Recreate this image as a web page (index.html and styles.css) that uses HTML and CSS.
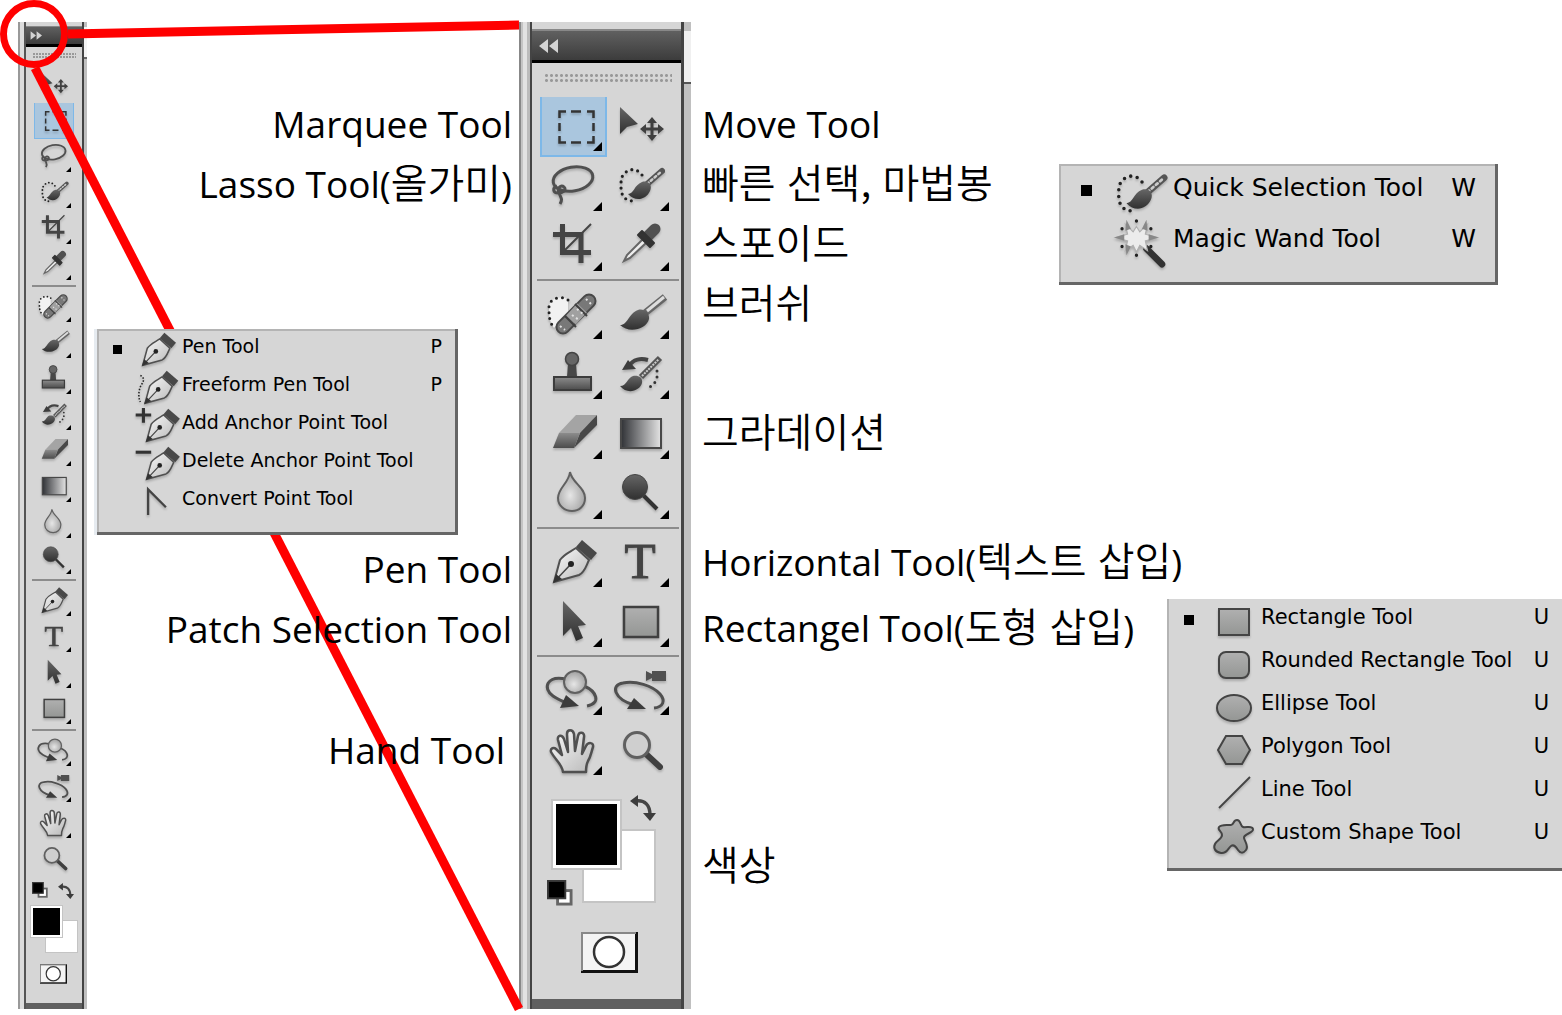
FILE: index.html
```html
<!DOCTYPE html>
<html lang="ko">
<head>
  <meta charset="UTF-8">
  <meta name="viewport" content="width=device-width, initial-scale=1.0">
  <title>Photoshop Tools</title>
  <link rel="stylesheet" href="styles.css">
</head>
<body>
  <!-- Icon sprite shared by both toolbars and the menus -->
  <svg class="sprite" width="0" height="0" aria-hidden="true">
    <defs>
      <linearGradient id="g-dark" x1="0" y1="0" x2="0" y2="1"><stop offset="0" stop-color="#666"/><stop offset="1" stop-color="#303030"/></linearGradient>
      <linearGradient id="g-mid" x1="0" y1="0" x2="0" y2="1"><stop offset="0" stop-color="#b0b0b0"/><stop offset="1" stop-color="#949694"/></linearGradient>
      <linearGradient id="g-stamp" x1="0" y1="0" x2="0" y2="1"><stop offset="0" stop-color="#8c8c8c"/><stop offset="1" stop-color="#4c4c4c"/></linearGradient>
      <linearGradient id="g-fade" x1="0" y1="0" x2="1" y2="0"><stop offset="0" stop-color="#303236"/><stop offset="1" stop-color="#e4e4e4"/></linearGradient>
      <linearGradient id="g-nib" x1="0" y1="0" x2="1" y2="1"><stop offset="0" stop-color="#fafafa"/><stop offset="1" stop-color="#b8b8b8"/></linearGradient>
      <radialGradient id="g-ball" cx=".45" cy=".6" r=".6"><stop offset="0" stop-color="#e6e6e6"/><stop offset="1" stop-color="#a0a0a0"/></radialGradient>
    </defs>

    <symbol id="marquee" viewBox="0 0 67 60">
      <path d="M19.500 21v-6.500H26M31 14.500h10M47 14.500h6.500V21M53.500 26v8M53.500 39v6.500H47M41 45.500H31M26 45.500h-6.500V39M19.500 34v-8" fill="none" stroke="#333" stroke-width="2.500"/>
    </symbol>
    <symbol id="move" viewBox="0 0 67 60">
      <path d="M13 10v27l7-7 11-3z" fill="url(#g-dark)"/>
      <path d="M45 23v18M36 32h18" stroke="#404040" stroke-width="3"/>
      <path d="M45 20l5 6H40zM45 44l5-6H40zM33 32l6-5v10zM57 32l-6-5v10z" fill="#404040"/>
    </symbol>
    <symbol id="lasso" viewBox="0 0 67 60">
      <ellipse cx="33" cy="22" rx="20" ry="12" transform="rotate(-10 33 22)" fill="none" stroke="#505050" stroke-width="3"/>
      <path d="M17 29c-5 2-4 7 1 7s9-3 6-6-7 1-5 6 4 6 1 11" fill="none" stroke="#505050" stroke-width="3"/>
    </symbol>
    <symbol id="quick" viewBox="0 0 67 60">
      <path d="M35 18C31 12 24 11 19 15s-5 8-5 14 1 15 13 15" fill="none" stroke="#222" stroke-width="3.200" stroke-linecap="round" stroke-dasharray="0 6"/>
      <path d="M39 28L55 14" stroke="#555" stroke-width="6" stroke-linecap="round"/>
      <path d="M40 27L55 14" stroke="#ccc" stroke-width="2.500" stroke-linecap="round" stroke-dasharray="2 3"/>
      <path d="M21 37c6 0 6-9 14-12 6-2 11 3 8 9-4 9-15 11-22 3z" fill="url(#g-dark)"/>
    </symbol>
    <symbol id="crop" viewBox="0 0 67 60">
      <path d="M22.500 7v28.500H51M13 17.500h28V46" fill="none" stroke="#444" stroke-width="5"/>
      <path d="M25 33L51 7" stroke="#444" stroke-width="2"/>
    </symbol>
    <symbol id="dropper" viewBox="0 0 67 60">
      <path d="M36 22L20 38l-3 6 6-3 17-16z" fill="#eee" stroke="#666" stroke-width="2"/>
      <path d="M40 20l8-8" stroke="#505050" stroke-width="11" stroke-linecap="round"/>
      <path d="M31 18l4-4 12 12-4 4z" fill="#333" stroke="#333" stroke-width="2" stroke-linejoin="round"/>
    </symbol>
    <symbol id="heal" viewBox="0 0 67 60">
      <path d="M28 15C22 10 9 13 9 22s0 14 5 21l14-16z" fill="#f2f2f2"/>
      <path d="M28 15C22 10 9 13 9 22s0 14 5 21" fill="none" stroke="#222" stroke-width="3" stroke-linecap="round" stroke-dasharray="0 6"/>
      <path d="M23 42L49 16" stroke="#484848" stroke-width="15" stroke-linecap="round"/>
      <path d="M23 42L49 16" stroke="#787878" stroke-width="11" stroke-linecap="round"/>
      <path d="M31 35L42 23" stroke="#a0a0a0" stroke-width="13"/>
      <path d="M25 31l11 11M35 19l12 12" stroke="#404040" stroke-width="2"/>
      <path d="M32 30l7 5M37 24l6 5M20 41l5 4M46 14l5 5" stroke="#e0e0e0" stroke-width="2" stroke-dasharray="2 3"/>
    </symbol>
    <symbol id="brush" viewBox="0 0 67 60">
      <path d="M38 28L58 12" stroke="#666" stroke-width="7"/>
      <path d="M40 26L57 12" stroke="#ddd" stroke-width="3"/>
      <path d="M13 40c8 0 8-11 18-15 6-2 12 3 11 9-2 10-20 15-29 6z" fill="url(#g-dark)"/>
    </symbol>
    <symbol id="stamp" viewBox="0 0 67 60">
      <path d="M28 18h8l1 14H27z" fill="#484848"/>
      <circle cx="32" cy="14" r="6.500" fill="#666" stroke="#444" stroke-width="1.500"/>
      <rect x="14" y="32" width="37" height="13" fill="url(#g-stamp)" stroke="#3c3c3c" stroke-width="2"/>
    </symbol>
    <symbol id="history" viewBox="0 0 67 60">
      <path d="M22 21C26 14 34 13 41 15" fill="none" stroke="#444" stroke-width="4"/>
      <path d="M15 25l6-10 8 9z" fill="#3c3c3c"/>
      <path d="M34 32L53 13" stroke="#555" stroke-width="6"/>
      <path d="M35 31L52 14" stroke="#ccc" stroke-width="2" stroke-dasharray="2 1"/>
      <path d="M13 41c7 0 7-8 13-10 6-1 10 2 9 7-2 8-15 12-22 3z" fill="url(#g-dark)"/>
      <path d="M50 26c1 7-1 13-9 17" fill="none" stroke="#333" stroke-width="3" stroke-linecap="round" stroke-dasharray="0 6"/>
    </symbol>
    <symbol id="eraser" viewBox="0 0 67 60">
      <path d="M36 10h21L40 28H19z" fill="#a4a4a4"/>
      <path d="M57 10v10L34 43l6-15z" fill="#484848"/>
      <path d="M19 28h21l-6 15H13z" fill="url(#g-stamp)"/>
    </symbol>
    <symbol id="gradient" viewBox="0 0 67 60">
      <rect x="14" y="14" width="40" height="29" fill="url(#g-fade)" stroke="#484848" stroke-width="2"/>
    </symbol>
    <symbol id="blur" viewBox="0 0 67 60">
      <path d="M30 7c2 11 15 15 15 26 0 8-6 13-13 13s-14-5-14-13c0-10 11-15 12-26z" fill="url(#g-ball)" stroke="#606060" stroke-width="2"/>
    </symbol>
    <symbol id="dodge" viewBox="0 0 67 60">
      <path d="M36 30l14 14" stroke="#333" stroke-width="4"/>
      <circle cx="28" cy="22" r="12.500" fill="url(#g-dark)" stroke="#444"/>
    </symbol>
    <symbol id="pen" viewBox="0 0 67 60">
      <path d="M14 49l6-22c4-6 10-8 16-12l13 12c-3 6-4 12-10 15z" fill="url(#g-nib)" stroke="#505050" stroke-width="2"/>
      <path d="M14 49l17-18" stroke="#444" stroke-width="1.500"/>
      <circle cx="31" cy="31" r="3" fill="#222"/>
      <path d="M42 7l15 13-6 7-15-13z" fill="#484848"/>
      <path d="M13 50l3-9 6 5z" fill="#333"/>
    </symbol>
    <symbol id="path" viewBox="0 0 67 60">
      <path d="M23 8v35l8-8 5 13 7-3-5-12 8-1z" fill="url(#g-dark)"/>
    </symbol>
    <symbol id="rect" viewBox="0 0 67 60">
      <rect x="17" y="14" width="34" height="30" fill="url(#g-mid)" stroke="#404040" stroke-width="2.500"/>
    </symbol>
    <symbol id="orbit" viewBox="0 0 67 60">
      <path d="M26 18C7 14 2 27 13 35c4 3 9 5 14 7M44 25c12 5 18 17 3 20" fill="none" stroke="#505050" stroke-width="3"/>
      <path d="M26 34l13 11-19 2z" fill="#3c3c3c"/>
      <circle cx="35" cy="21" r="11" fill="url(#g-ball)" stroke="#606060" stroke-width="2"/>
    </symbol>
    <symbol id="camera" viewBox="0 0 67 60">
      <path d="M27 44C7 38 3 24 16 22c12-3 30 3 37 11 6 7 3 13-6 14" fill="none" stroke="#505050" stroke-width="3"/>
      <path d="M27 37l12 11H20z" fill="#3c3c3c"/>
      <path d="M39 10l6 3v-3h14v10H45v-3l-6 3z" fill="#505050"/>
    </symbol>
    <symbol id="hand" viewBox="0 0 67 60">
      <path d="M23 51c-1-8-7-11-12-20-1-4 3-5 5-3l6 6-4-15c-1-5 4-6 6-1l4 13-1-18c0-5 6-5 7 0l1 17 3-15c1-5 7-4 6 1l-2 17 4-8c2-4 8-4 7 1-2 6-2 9-5 14-2 4-2 7-2 11z" fill="url(#g-nib)" stroke="#505050" stroke-width="2.500" stroke-linejoin="round"/>
    </symbol>
    <symbol id="zoom" viewBox="0 0 67 60">
      <path d="M39 33l14 13" stroke="#404040" stroke-width="6" stroke-linecap="round"/>
      <circle cx="30" cy="24" r="12.500" fill="#cfcfcf" stroke="#606060" stroke-width="3"/>
    </symbol>
    <symbol id="swap" viewBox="0 0 26 26">
      <path d="M6 6c9-1 14 4 14 14" fill="none" stroke="#444" stroke-width="3.500"/>
      <path d="M0 6l8-6v12zM13 18h13l-6 8z" fill="#3c3c3c"/>
    </symbol>
    <symbol id="default" viewBox="0 0 27 27">
      <rect x="11" y="11" width="14" height="14" fill="#fff" stroke="#666" stroke-width="3"/>
      <rect x="1" y="1" width="18" height="18" fill="#000" stroke="#3a3a3a" stroke-width="2"/>
    </symbol>
    <symbol id="mask" viewBox="0 0 57 41">
      <rect width="57" height="41" fill="#111"/>
      <path d="M0 0h55v2H2v37H0z" fill="#888"/>
      <rect x="2" y="2" width="52" height="36" fill="#f4f4f4"/>
      <circle cx="28" cy="20" r="15" fill="#fff" stroke="#333" stroke-width="2.500"/>
    </symbol>
  </svg>

  <main class="board">
    <aside class="palette palette-small" aria-label="Single column toolbar">
      <div class="panel">
        <button class="collapse" aria-label="Expand"><svg viewBox="0 0 20 14"><path d="M1 0l9 7-9 7zM11 0l9 7-9 7z" fill="#d4d4d4"/></svg></button>
        <div class="grip"></div>
        <div class="tools">
          <button class="tool" aria-label="Move"><svg><use href="#move"/></svg></button>
          <button class="tool active" aria-label="Marquee"><svg><use href="#marquee"/></svg></button>
          <button class="tool more" aria-label="Lasso"><svg><use href="#lasso"/></svg></button>
          <button class="tool more" aria-label="Quick selection"><svg><use href="#quick"/></svg></button>
          <button class="tool more" aria-label="Crop"><svg><use href="#crop"/></svg></button>
          <button class="tool more" aria-label="Eyedropper"><svg><use href="#dropper"/></svg></button>
          <hr>
          <button class="tool more" aria-label="Healing brush"><svg><use href="#heal"/></svg></button>
          <button class="tool more" aria-label="Brush"><svg><use href="#brush"/></svg></button>
          <button class="tool more" aria-label="Stamp"><svg><use href="#stamp"/></svg></button>
          <button class="tool more" aria-label="History brush"><svg><use href="#history"/></svg></button>
          <button class="tool more" aria-label="Eraser"><svg><use href="#eraser"/></svg></button>
          <button class="tool more" aria-label="Gradient"><svg><use href="#gradient"/></svg></button>
          <button class="tool more" aria-label="Blur"><svg><use href="#blur"/></svg></button>
          <button class="tool more" aria-label="Dodge"><svg><use href="#dodge"/></svg></button>
          <hr>
          <button class="tool more" aria-label="Pen"><svg><use href="#pen"/></svg></button>
          <button class="tool more" aria-label="Type"><svg viewBox="0 0 67 60"><text x="33" y="45" text-anchor="middle" class="glyph">T</text></svg></button>
          <button class="tool more" aria-label="Path selection"><svg><use href="#path"/></svg></button>
          <button class="tool more" aria-label="Rectangle"><svg><use href="#rect"/></svg></button>
          <hr>
          <button class="tool more" aria-label="3D rotate"><svg><use href="#orbit"/></svg></button>
          <button class="tool more" aria-label="3D camera"><svg><use href="#camera"/></svg></button>
          <button class="tool more" aria-label="Hand"><svg><use href="#hand"/></svg></button>
          <button class="tool" aria-label="Zoom"><svg><use href="#zoom"/></svg></button>
        </div>
        <div class="colors">
          <button class="default" aria-label="Default colors"><svg><use href="#default"/></svg></button>
          <button class="swap" aria-label="Swap colors"><svg><use href="#swap"/></svg></button>
          <button class="swatch background" aria-label="Background color"></button>
          <button class="swatch foreground" aria-label="Foreground color"></button>
        </div>
        <button class="mask" aria-label="Quick mask"><svg><use href="#mask"/></svg></button>
      </div>
    </aside>

    <ul class="labels labels-left">
      <li>Marquee Tool</li>
      <li>Lasso Tool(<span class="ko">올가미</span>)</li>
      <li class="label-pen">Pen Tool</li>
      <li>Patch Selection Tool</li>
      <li class="label-hand">Hand Tool</li>
    </ul>

    <aside class="palette palette-large" aria-label="Two column toolbar">
      <div class="panel">
        <button class="collapse" aria-label="Collapse"><svg viewBox="0 0 20 14"><path d="M9 0L0 7l9 7zM19 0l-9 7 9 7z" fill="#d4d4d4"/></svg></button>
        <div class="grip"></div>
        <div class="tools">
          <button class="tool active more" aria-label="Marquee"><svg><use href="#marquee"/></svg></button>
          <button class="tool" aria-label="Move"><svg><use href="#move"/></svg></button>
          <button class="tool more" aria-label="Lasso"><svg><use href="#lasso"/></svg></button>
          <button class="tool more" aria-label="Quick selection"><svg><use href="#quick"/></svg></button>
          <button class="tool more" aria-label="Crop"><svg><use href="#crop"/></svg></button>
          <button class="tool more" aria-label="Eyedropper"><svg><use href="#dropper"/></svg></button>
          <hr>
          <button class="tool more" aria-label="Healing brush"><svg><use href="#heal"/></svg></button>
          <button class="tool more" aria-label="Brush"><svg><use href="#brush"/></svg></button>
          <button class="tool more" aria-label="Stamp"><svg><use href="#stamp"/></svg></button>
          <button class="tool more" aria-label="History brush"><svg><use href="#history"/></svg></button>
          <button class="tool more" aria-label="Eraser"><svg><use href="#eraser"/></svg></button>
          <button class="tool more" aria-label="Gradient"><svg><use href="#gradient"/></svg></button>
          <button class="tool more" aria-label="Blur"><svg><use href="#blur"/></svg></button>
          <button class="tool more" aria-label="Dodge"><svg><use href="#dodge"/></svg></button>
          <hr>
          <button class="tool more" aria-label="Pen"><svg><use href="#pen"/></svg></button>
          <button class="tool more" aria-label="Type"><svg viewBox="0 0 67 60"><text x="33" y="45" text-anchor="middle" class="glyph">T</text></svg></button>
          <button class="tool more" aria-label="Path selection"><svg><use href="#path"/></svg></button>
          <button class="tool more" aria-label="Rectangle"><svg><use href="#rect"/></svg></button>
          <hr>
          <button class="tool more" aria-label="3D rotate"><svg><use href="#orbit"/></svg></button>
          <button class="tool more" aria-label="3D camera"><svg><use href="#camera"/></svg></button>
          <button class="tool more" aria-label="Hand"><svg><use href="#hand"/></svg></button>
          <button class="tool" aria-label="Zoom"><svg><use href="#zoom"/></svg></button>
        </div>
        <div class="colors">
          <button class="swatch background" aria-label="Background color"></button>
          <button class="swatch foreground" aria-label="Foreground color"></button>
          <button class="swap" aria-label="Swap colors"><svg><use href="#swap"/></svg></button>
          <button class="default" aria-label="Default colors"><svg><use href="#default"/></svg></button>
        </div>
        <button class="mask" aria-label="Quick mask"><svg><use href="#mask"/></svg></button>
      </div>
    </aside>

    <ul class="labels labels-right">
      <li>Move Tool</li>
      <li><span class="ko">빠른 선택, 마법봉</span></li>
      <li><span class="ko">스포이드</span></li>
      <li><span class="ko">브러쉬</span></li>
      <li class="label-group"><span class="ko">그라데이션</span></li>
      <li class="label-group">Horizontal Tool(<span class="ko">텍스트 삽입</span>)</li>
      <li class="label-shape">Rectangel Tool(<span class="ko">도형 삽입</span>)</li>
      <li class="label-color"><span class="ko">색상</span></li>
    </ul>

    <!-- Red call-out from the collapse button to the wide toolbar -->
    <svg class="callout" width="530" height="1012" aria-hidden="true">
      <g fill="none" stroke="#f00">
        <circle cx="34" cy="34" r="30.500" stroke-width="7"/>
        <path d="M68 34L519 25" stroke-width="9"/>
        <path d="M35 68L519 1009" stroke-width="9"/>
      </g>
    </svg>

    <div class="menu menu-pen">
      <button class="item current"><svg viewBox="3 6 59 49"><use href="#pen" width="67" height="60"/></svg><span>Pen Tool</span><kbd>P</kbd></button>
      <button class="item"><svg viewBox="3 6 59 49"><use href="#pen" x="3" width="67" height="60"/><path d="M11 13c5 2 5 7 2 11s-6 15-2 23" fill="none" stroke="#222" stroke-width="2" stroke-dasharray="2 2"/></svg><span>Freeform Pen Tool</span><kbd>P</kbd></button>
      <button class="item"><svg viewBox="3 6 59 49"><use href="#pen" x="5" width="67" height="60"/><path d="M5 15h20M15 6v19" stroke="#333" stroke-width="4"/></svg><span>Add Anchor Point Tool</span></button>
      <button class="item"><svg viewBox="3 6 59 49"><use href="#pen" x="5" width="67" height="60"/><path d="M5 14h20" stroke="#333" stroke-width="4"/></svg><span>Delete Anchor Point Tool</span></button>
      <button class="item"><svg viewBox="3 6 59 49"><path d="M21 46V13l23 23" fill="none" stroke="#444" stroke-width="3"/></svg><span>Convert Point Tool</span></button>
    </div>

    <div class="menu menu-quick">
      <button class="item current"><svg viewBox="10 8 52 46"><use href="#quick" x="1" width="67" height="60"/></svg><span>Quick Selection Tool</span><kbd>W</kbd></button>
      <button class="item"><svg viewBox="10 8 52 46">
        <path d="M40 32l14 14" stroke="#333" stroke-width="6" stroke-linecap="round"/>
        <path d="M31 12l3 5 7-7-2 9 11 3-11 3 2 9-7-5-3 6-3-6-7 5 2-9-11-3 11-3-2-9 7 7z" fill="#ececec" stroke="#b0b0b0"/>
        <path d="M11 22l9-3v6zM51 22l-9-3v6zM22 6l4 8-5 2zM40 6l-4 8 5 2zM22 38l4-8-5-2z" fill="#888"/>
        <path d="M31 7v.1M31 38v.1M18 14v.1M44 14v.1M18 30v.1M44 30v.1" stroke="#222" stroke-width="3" stroke-linecap="round"/>
      </svg><span>Magic Wand Tool</span><kbd>W</kbd></button>
    </div>

    <div class="menu menu-shape">
      <button class="item current"><svg viewBox="0 0 44 43"><rect x="7" y="6" width="30" height="26" class="shape"/></svg><span>Rectangle Tool</span><kbd>U</kbd></button>
      <button class="item"><svg viewBox="0 0 44 43"><rect x="7" y="6" width="30" height="26" rx="7" class="shape"/></svg><span>Rounded Rectangle Tool</span><kbd>U</kbd></button>
      <button class="item"><svg viewBox="0 0 44 43"><ellipse cx="22" cy="19" rx="17" ry="13" class="shape"/></svg><span>Ellipse Tool</span><kbd>U</kbd></button>
      <button class="item"><svg viewBox="0 0 44 43"><path d="M14 4h16l8 14-8 14H14L6 18z" class="shape"/></svg><span>Polygon Tool</span><kbd>U</kbd></button>
      <button class="item"><svg viewBox="0 0 44 43"><path d="M7 33L38 2" class="shape"/></svg><span>Line Tool</span><kbd>U</kbd></button>
      <button class="item"><svg viewBox="0 0 44 43"><path d="M19 7c3 0 2-5 6-5s3 6 6 7 9-2 10 2-10 5-9 9 5 8 2 12-6 3-8 0-4-6-7-4-4 8-10 7-8-5-6-9 7-5 7-9-5-5-3-8 8-2 12-2z" class="shape"/></svg><span>Custom Shape Tool</span><kbd>U</kbd></button>
    </div>
  </main>
</body>
</html>
```
FILE: styles.css
```css
* {
  margin: 0;
  padding: 0;
  box-sizing: border-box;
}

body {
  background-color: #fff;
  color: #000;
  font-family: "Open Sans", "Noto Sans CJK KR", sans-serif;
}

button {
  border: 0;
  background: none;
  font: inherit;
  color: inherit;
  text-align: left;
}

svg {
  display: block;
}

ul {
  list-style: none;
}

.sprite {
  position: absolute;
}

.board {
  position: relative;
  display: flex;
  align-items: stretch;
  padding: 22px 0 6px 18px;
}

/* Toolbars */
.palette {
  flex: none;
}

.panel {
  display: flex;
  flex-direction: column;
  height: 100%;
  background-color: #d6d6d6;
}

.palette-small {
  width: 69px;
  padding: 4px 5px 0 8px;
  background:
    linear-gradient(#f4f4f4 0 30px, #666 30px 32px) 66px 5px / 3px 32px no-repeat,
    linear-gradient(to right, #999 0 2px, #dcdcdc 2px 6px, #555 6px 8px, #d6d6d6 8px 64px, #444 64px 66px, #c0c0c0 66px);
}

.palette-small .panel {
  border-top: 1px solid #888;
}

.palette-large {
  width: 172px;
  padding: 7px 10px 0 13px;
  background:
    linear-gradient(#f0f0f0 0 51px, #555 51px 53px) 165px 9px / 7px 53px no-repeat,
    linear-gradient(to right, #888 0 2px, #c4c4c4 2px 4px, #e2e2e2 4px 8px, #bbb 8px 11px, #444 11px 13px, #d6d6d6 13px 162px, #444 162px 165px, #c0c0c0 165px);
}

.palette-large .panel {
  border-top: 2px solid #888;
}

.collapse {
  display: flex;
  align-items: center;
  background: linear-gradient(#606060, #3c3c3c);
  border-bottom: 3px solid #000;
}

.palette-small .collapse {
  height: 20px;
  padding-left: 4px;
}

.palette-small .collapse svg {
  width: 12px;
  height: 9px;
}

.palette-large .collapse {
  height: 32px;
  padding-left: 7px;
}

.palette-large .collapse svg {
  width: 20px;
  height: 14px;
}

.palette-small .grip {
  height: 5px;
  margin: 6px 6px 9px 7px;
  background:
    linear-gradient(to right, transparent 2px, #d6d6d6 2px) 0 0 / 3px 5px,
    linear-gradient(#999 0 2px, transparent 2px 3px, #999 3px 5px);
}

.palette-large .grip {
  height: 10px;
  margin: 10px 9px 14px 12px;
  background-image: radial-gradient(circle, #999 0 1px, transparent 2px);
  background-size: 5px 5px;
}

.tools {
  display: grid;
}

.palette-small .tools {
  grid-template-columns: 40px;
  padding-left: 8px;
}

.palette-large .tools {
  grid-template-columns: 67px 67px;
  padding-left: 8px;
}

.tool {
  position: relative;
}

.tool svg,
.item svg {
  filter: drop-shadow(0 2px 1px rgba(0, 0, 0, 0.2));
}

.palette-small .tool,
.palette-small .tool svg {
  width: 40px;
  height: 36px;
}

.palette-large .tool,
.palette-large .tool svg {
  width: 67px;
  height: 60px;
}

.active {
  background-color: #aac6de;
  box-shadow: inset 2px -2px #7db8e8, inset -2px 0 #7db8e8;
}

.palette-small .active {
  box-shadow: inset 1px -1px #7db8e8, inset -1px 0 #7db8e8;
}

.more::after {
  content: "";
  position: absolute;
  right: 5px;
  bottom: 6px;
  width: 9px;
  height: 9px;
  background-color: #000;
  clip-path: polygon(100% 0, 100% 100%, 0 100%);
}

.palette-small .more::after {
  right: 3px;
  bottom: 3px;
  width: 5px;
  height: 5px;
}

.glyph {
  font: 51px "Liberation Serif", serif;
  fill: #444;
  stroke: #444;
  stroke-width: 1px;
}

hr {
  grid-column: 1 / -1;
  height: 2px;
  border: 0;
  background-color: #8c8c8c;
}

.palette-small hr {
  margin: 2px -2px;
}

.palette-large hr {
  width: 142px;
  margin: 2px -3px 4px;
}

/* Colour swatches */
.colors {
  position: relative;
}

.palette-small .colors {
  height: 72px;
  margin-top: 5px;
}

.palette-large .colors {
  height: 111px;
  margin-top: 14px;
}

.swatch,
.swap,
.default {
  position: absolute;
}

.swatch {
  border: 2px solid #c4c4c4;
  background-color: #fff;
}

.foreground {
  background-color: #000;
  box-shadow: inset 0 0 0 2px #fff;
}

.palette-small .swatch {
  width: 33px;
  height: 33px;
  border-width: 1px;
}

.palette-small .foreground {
  left: 4px;
  top: 23px;
}

.palette-small .background {
  left: 19px;
  top: 38px;
}

.palette-small .default {
  left: 6px;
  top: 0;
}

.palette-small .swap {
  right: 8px;
  top: 1px;
}

.palette-small .default svg,
.palette-small .swap svg {
  width: 16px;
  height: 16px;
}

.palette-large .foreground {
  left: 19px;
  top: 4px;
  width: 71px;
  height: 71px;
  box-shadow: inset 0 0 0 3px #fff;
}

.palette-large .background {
  left: 50px;
  top: 34px;
  width: 74px;
  height: 74px;
}

.palette-large .swap {
  left: 98px;
  top: 0;
}

.palette-large .default {
  left: 15px;
  top: 85px;
}

.palette-large .default svg,
.palette-large .swap svg {
  width: 26px;
  height: 26px;
}

.palette-small .mask {
  margin: 10px 0 19px 14px;
}

.palette-small .mask svg {
  width: 27px;
  height: 20px;
}

.palette-large .mask {
  margin: 26px 0 26px 49px;
}

.palette-large .mask svg {
  width: 57px;
  height: 41px;
}

.panel::after {
  content: "";
  flex: 1;
  min-height: 6px;
  background-color: #606060;
}

/* Tool names beside the wide toolbar */
.labels {
  position: relative;
  z-index: 2;
  padding-top: 72px;
  font-size: 37px;
  line-height: 60px;
  white-space: nowrap;
}

.labels li {
  height: 60px;
}

.ko {
  font-family: "Noto Sans CJK KR", sans-serif;
  font-size: 40px;
  font-weight: 350;
  line-height: 1;
}

.labels-left {
  width: 432px;
  padding-right: 7px;
  text-align: right;
}

.labels-right {
  flex: 1;
  padding-left: 11px;
}

.labels .label-pen {
  margin-top: 325px;
}

.labels .label-hand {
  margin-top: 61px;
  padding-right: 7px;
}

.labels .label-group {
  margin-top: 69px;
}

.labels .label-shape {
  margin-top: 6px;
}

.labels .label-color {
  margin-top: 178px;
}

.callout {
  position: absolute;
  left: 0;
  top: 0;
  z-index: 1;
}

/* Flyout menus */
.menu {
  position: absolute;
  z-index: 3;
  background-color: #d6d6d6;
  border: solid #666;
  border-width: 0 3px 3px 0;
  box-shadow: inset 2px 2px #b4b4b4;
  font-family: "DejaVu Sans", sans-serif;
}

.item {
  position: relative;
  display: flex;
  align-items: flex-start;
  width: 100%;
}

.item svg {
  overflow: visible;
}

.item kbd {
  margin-left: auto;
  font: inherit;
}

.current::before {
  content: "";
  position: absolute;
  background-color: #000;
}

.shape {
  fill: url(#g-mid);
  stroke: #444;
  stroke-width: 2px;
}

.menu-pen {
  left: 97px;
  top: 329px;
  width: 361px;
  height: 206px;
  padding: 3px 13px 0 37px;
  box-shadow: inset 2px 2px #b4b4b4, -3px 0 #e6ebf0;
  font-size: 19px;
  line-height: 28px;
}

.menu-pen .item {
  height: 38px;
}

.menu-pen svg {
  width: 46px;
  height: 38px;
  margin-right: 2px;
}

.menu-pen .current::before {
  left: -21px;
  top: 13px;
  width: 9px;
  height: 9px;
}

.menu-quick {
  left: 1059px;
  top: 164px;
  width: 439px;
  height: 121px;
  padding: 7px 19px 0 54px;
  font-size: 25px;
  line-height: 34px;
}

.menu-quick .item {
  height: 51px;
}

.menu-quick svg {
  width: 58px;
  height: 51px;
  margin-right: 2px;
}

.menu-quick .current::before {
  left: -32px;
  top: 14px;
  width: 11px;
  height: 11px;
}

.menu-shape {
  left: 1167px;
  right: 0;
  top: 599px;
  height: 272px;
  padding: 4px 13px 0 45px;
  border-right: 0;
  box-shadow: inset 2px 0 #b4b4b4;
  font-size: 21px;
  line-height: 28px;
}

.menu-shape .item {
  height: 43px;
}

.menu-shape svg {
  width: 44px;
  height: 43px;
  margin-right: 5px;
}

.menu-shape .current::before {
  left: -28px;
  top: 12px;
  width: 10px;
  height: 10px;
}
```
